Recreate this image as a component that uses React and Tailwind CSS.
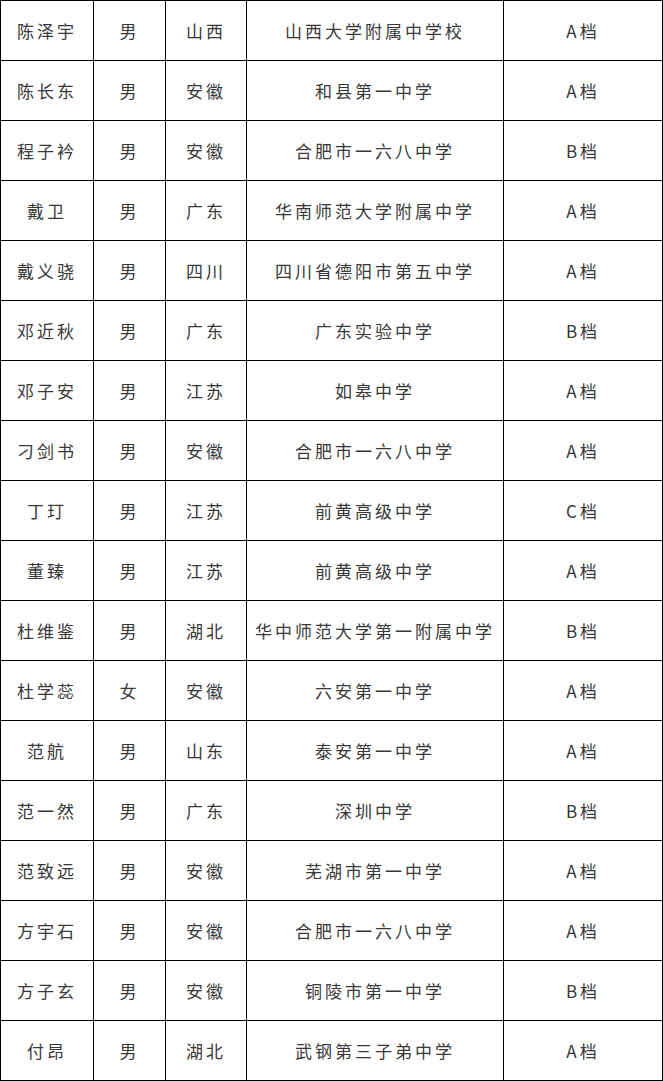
const rows = [
  ["陈泽宇", "男", "山西", "山西大学附属中学校", "A档"],
  ["陈长东", "男", "安徽", "和县第一中学", "A档"],
  ["程子衿", "男", "安徽", "合肥市一六八中学", "B档"],
  ["戴卫", "男", "广东", "华南师范大学附属中学", "A档"],
  ["戴义骁", "男", "四川", "四川省德阳市第五中学", "A档"],
  ["邓近秋", "男", "广东", "广东实验中学", "B档"],
  ["邓子安", "男", "江苏", "如皋中学", "A档"],
  ["刁剑书", "男", "安徽", "合肥市一六八中学", "A档"],
  ["丁玎", "男", "江苏", "前黄高级中学", "C档"],
  ["董臻", "男", "江苏", "前黄高级中学", "A档"],
  ["杜维鉴", "男", "湖北", "华中师范大学第一附属中学", "B档"],
  ["杜学蕊", "女", "安徽", "六安第一中学", "A档"],
  ["范航", "男", "山东", "泰安第一中学", "A档"],
  ["范一然", "男", "广东", "深圳中学", "B档"],
  ["范致远", "男", "安徽", "芜湖市第一中学", "A档"],
  ["方宇石", "男", "安徽", "合肥市一六八中学", "A档"],
  ["方子玄", "男", "安徽", "铜陵市第一中学", "B档"],
  ["付昂", "男", "湖北", "武钢第三子弟中学", "A档"],
];

export default function App() {
  return (
    <div className="bg-white w-[663px] font-['Noto_Sans_CJK_SC',sans-serif] text-[#383838]">
      <table className="table-fixed border-collapse w-[662px]">
        <colgroup>
          <col className="w-[93px]" />
          <col className="w-[72px]" />
          <col className="w-[81px]" />
          <col className="w-[257px]" />
          <col className="w-[159px]" />
        </colgroup>
        <tbody>
          {rows.map((r, i) => (
            <tr key={i} className="h-[60px]">
              {r.map((c, j) => (
                <td
                  key={j}
                  className="border border-black text-center align-middle text-[17px] tracking-[3px] leading-none p-0"
                >
                  {c}
                </td>
              ))}
            </tr>
          ))}
        </tbody>
      </table>
    </div>
  );
}
